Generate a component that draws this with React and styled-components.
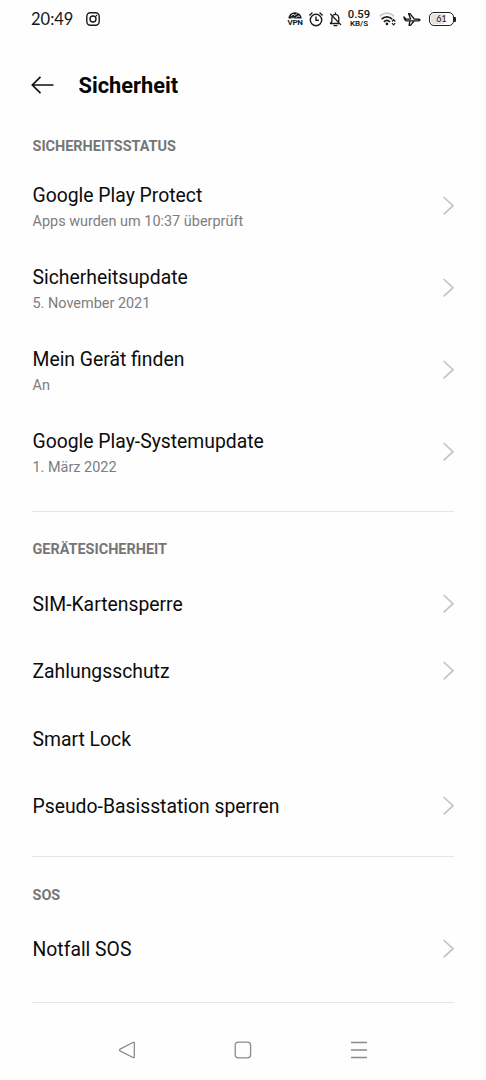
import React from "react";
import styled, { createGlobalStyle } from "styled-components";

const GlobalStyle = createGlobalStyle`
  * { box-sizing: border-box; }
  body { margin: 0; background: #fefefe; font-family: Roboto, "Noto Sans", sans-serif; color: #0c0c0c; }
  svg { display: block; flex: none; }
`;

const Screen = styled.div`
  display: flex;
  flex-direction: column;
  width: 486px;
  height: 1080px;
  overflow: hidden;
  background: #fefefe;
`;

const StatusBar = styled.header`
  display: flex;
  align-items: center;
  height: 38px;
  padding: 0 31px;
  font-family: Lato, sans-serif;
  color: #161616;
`;

const Clock = styled.time`
  width: 42px;
  margin-right: 13px;
  font-size: 16.5px;
  line-height: 20px;
  white-space: nowrap;
`;

const StatusIcons = styled.div`
  display: flex;
  align-items: center;
  gap: 6px;
  margin-left: auto;
`;

const VpnBadge = styled.div`
  display: flex;
  flex-direction: column;
  align-items: center;
  width: 15px;
  span { font: 700 8px/8px Roboto, sans-serif; letter-spacing: -0.4px; }
`;

const Speed = styled.div`
  display: flex;
  flex-direction: column;
  align-items: center;
  width: 23px;
  margin-right: 2px;
  font-family: Roboto, sans-serif;
  strong { font-size: 11.3px; line-height: 9px; font-weight: 500; }
  span { padding-top: 1px; font-size: 8px; line-height: 8px; font-weight: 600; }
`;

const Battery = styled.div`
  display: flex;
  align-items: center;
  margin: 0 -0.5px 0 2.5px;
  &::after { content: ""; width: 1.5px; height: 5px; background: #222; border-radius: 0 1px 1px 0; }
`;

const BatteryShell = styled.div`
  display: flex;
  width: 25px;
  height: 14px;
  padding: 1px;
  border: 1px solid #222;
  border-radius: 5px;
`;

const BatteryLevel = styled.span`
  flex: 1;
  border-radius: 3px;
  background: linear-gradient(to right, #e2e2e2 64%, #fefefe 64%);
  font-size: 9px;
  line-height: 10px;
  text-align: center;
`;

const TitleBar = styled.div`
  display: flex;
  align-items: center;
  gap: 24.5px;
  height: 94px;
  padding-left: 31px;
`;

const Title = styled.h1`
  margin: 0;
  padding-top: 1px;
  font-size: 21.8px;
  line-height: 28px;
  font-weight: 700;
  color: #050505;
`;

const Section = styled.section`
  margin: 0 32px;
  padding-bottom: ${(p) => p.$bottom}px;
  border-bottom: 1px solid #e6e6e6;
`;

const SectionTitle = styled.h2`
  margin: 0;
  height: ${(p) => p.$height}px;
  padding: ${(p) => p.$top}px 0 0 0.5px;
  font-size: 14.45px;
  line-height: 18px;
  font-weight: 700;
  color: #767676;
`;

const Row = styled.div`
  display: flex;
  align-items: center;
  justify-content: space-between;
  height: ${(p) => (p.$tall ? 82 : 67.5)}px;
  padding-left: 0.5px;
`;

const RowTitle = styled.div`
  padding-top: ${(p) => (p.$single ? 2 : 1)}px;
  font-size: 19.35px;
  line-height: 26px;
`;

const RowDetail = styled.div`
  margin: 3px 0 -1px;
  font-size: 14.45px;
  line-height: 20px;
  color: #7d7d7d;
`;

const NavBar = styled.nav`
  display: flex;
  align-items: center;
  justify-content: space-between;
  height: 18px;
  margin: 38px 118px 0 118px;
`;

const Chevron = () => (
  <svg width="12" height="20" viewBox="0 0 12 20" fill="none" stroke="#c4c4c4" strokeWidth="1.7">
    <path d="M1.6 1 11 9.7 1.6 18.4" />
  </svg>
);

const sections = [
  { title: "SICHERHEITSSTATUS", top: 6, height: 33, bottom: 18, rows: [
    { title: "Google Play Protect", detail: "Apps wurden um 10:37 überprüft", link: true },
    { title: "Sicherheitsupdate", detail: "5. November 2021", link: true },
    { title: "Mein Gerät finden", detail: "An", link: true },
    { title: "Google Play-Systemupdate", detail: "1. März 2022", link: true },
  ] },
  { title: "GERÄTESICHERHEIT", top: 29, height: 58, bottom: 16, rows: [
    { title: "SIM-Kartensperre", link: true },
    { title: "Zahlungsschutz", link: true },
    { title: "Smart Lock", link: false },
    { title: "Pseudo-Basisstation sperren", link: true },
  ] },
  { title: "SOS", top: 30, height: 58, bottom: 19.5, rows: [
    { title: "Notfall SOS", link: true },
  ] },
];

export default function App() {
  return (
    <>
      <GlobalStyle />
      <Screen>
        <StatusBar>
          <Clock>20:49</Clock>
          <svg width="14" height="14" viewBox="0 0 14 14" fill="none" stroke="#1a1a1a" strokeWidth="1.4">
            <rect x="0.8" y="0.8" width="12.4" height="12.4" rx="3.6" />
            <circle cx="7" cy="7" r="3" />
            <circle cx="10.5" cy="3.6" r="0.8" fill="#1a1a1a" stroke="none" />
          </svg>
          <StatusIcons>
            <VpnBadge>
              <svg width="14" height="7" viewBox="0 0 14 7">
                <path d="M0.4 6.4a6.6 6.2 0 0 1 13.2 0z" fill="#161616" />
                <path d="M2.8 4.3 5 2.2l2 1.3L9 1.4M8 5.8l1.8-1.9 2 .6M3.4 6.2h3" fill="none" stroke="#fff" strokeWidth="0.9" />
              </svg>
              <span>VPN</span>
            </VpnBadge>
            <svg width="14" height="15" viewBox="0 0 14 15" fill="none" stroke="#1a1a1a" strokeWidth="1.4" strokeLinecap="round">
              <circle cx="7" cy="8" r="5.7" />
              <path d="M7 5v3.3h2.3M0.8 3 3 1M13.2 3 11 1" />
            </svg>
            <svg width="13" height="15" viewBox="0 0 13 15" fill="none" stroke="#1a1a1a" strokeWidth="1.3" strokeLinecap="round" strokeLinejoin="round">
              <path d="M6.5 1v1M4.4 3C6.8 1.4 9.8 3 9.8 6v3.2M2.9 5.2v4.2L1.4 11.5h8.2M5 13.6h3M1.7 2.2l10 10.4" />
            </svg>
            <Speed><strong>0.59</strong><span>KB/S</span></Speed>
            <svg width="18" height="14" viewBox="0 0 18 14" fill="none" stroke="#1a1a1a" strokeWidth="1.8">
              <path d="M0.7 4.4C4.8.1 11 .1 15 4.4" stroke="#c9c9c9" />
              <path d="M2.6 7.2C5.7 4 10 4 13.2 7.2" />
              <path d="M4.9 9.9c1.9-1.9 4.1-1.9 6 0" />
              <circle cx="7.9" cy="11.9" r="1.3" fill="#1a1a1a" stroke="none" />
              <path d="m13 9.5 1.6-1.8 1.6 1.8M13 11.1l1.6 1.8 1.6-1.8" strokeWidth="1.2" />
            </svg>
            <svg width="18" height="15" viewBox="0 0 18 15" fill="none" stroke="#1a1a1a" strokeWidth="1.4" strokeLinejoin="round" strokeLinecap="round">
              <path d="M1 5 2.8 7l4.8.1L5.6 1.6h1.3l4.4 5.4 4.6.2c1.4.2 1.4 1.6 0 1.7L3.6 8.9C2 8.8 1.3 7.3 1 5zM6.9 9.2l-.8 4.2h1.4l3.3-4.1" />
            </svg>
            <Battery><BatteryShell><BatteryLevel>61</BatteryLevel></BatteryShell></Battery>
          </StatusIcons>
        </StatusBar>
        <TitleBar>
          <svg width="23" height="18" viewBox="0 0 23 18" fill="none" stroke="#111" strokeWidth="1.7">
            <path d="M22.5 9H1.5M9.5 0.8 1.3 9l8.2 8.2" />
          </svg>
          <Title>Sicherheit</Title>
        </TitleBar>
        {sections.map((s) => (
          <Section key={s.title} $bottom={s.bottom}>
            <SectionTitle $top={s.top} $height={s.height}>{s.title}</SectionTitle>
            {s.rows.map((r) => (
              <Row key={r.title} $tall={!!r.detail}>
                <div>
                  <RowTitle $single={!r.detail}>{r.title}</RowTitle>
                  {r.detail && <RowDetail>{r.detail}</RowDetail>}
                </div>
                {r.link && <Chevron />}
              </Row>
            ))}
          </Section>
        ))}
        <NavBar>
          <svg width="18" height="18" viewBox="0 0 18 18" fill="none" stroke="#8a8a8a" strokeWidth="1.3" strokeLinejoin="round">
            <path d="M15 1.5Q16.3.8 16.3 2.2v13.6q0 1.4-1.3.7L2 9.8Q.8 9 2 8.2z" />
          </svg>
          <svg width="18" height="18" viewBox="0 0 18 18" fill="none" stroke="#8a8a8a" strokeWidth="1.3">
            <rect x="1.2" y="1.2" width="15.4" height="15.6" rx="3" />
          </svg>
          <svg width="18" height="18" viewBox="0 0 18 18" stroke="#8a8a8a" strokeWidth="1.3">
            <path d="M1 1.5h16M1 9h16M1 16.5h16" />
          </svg>
        </NavBar>
      </Screen>
    </>
  );
}
